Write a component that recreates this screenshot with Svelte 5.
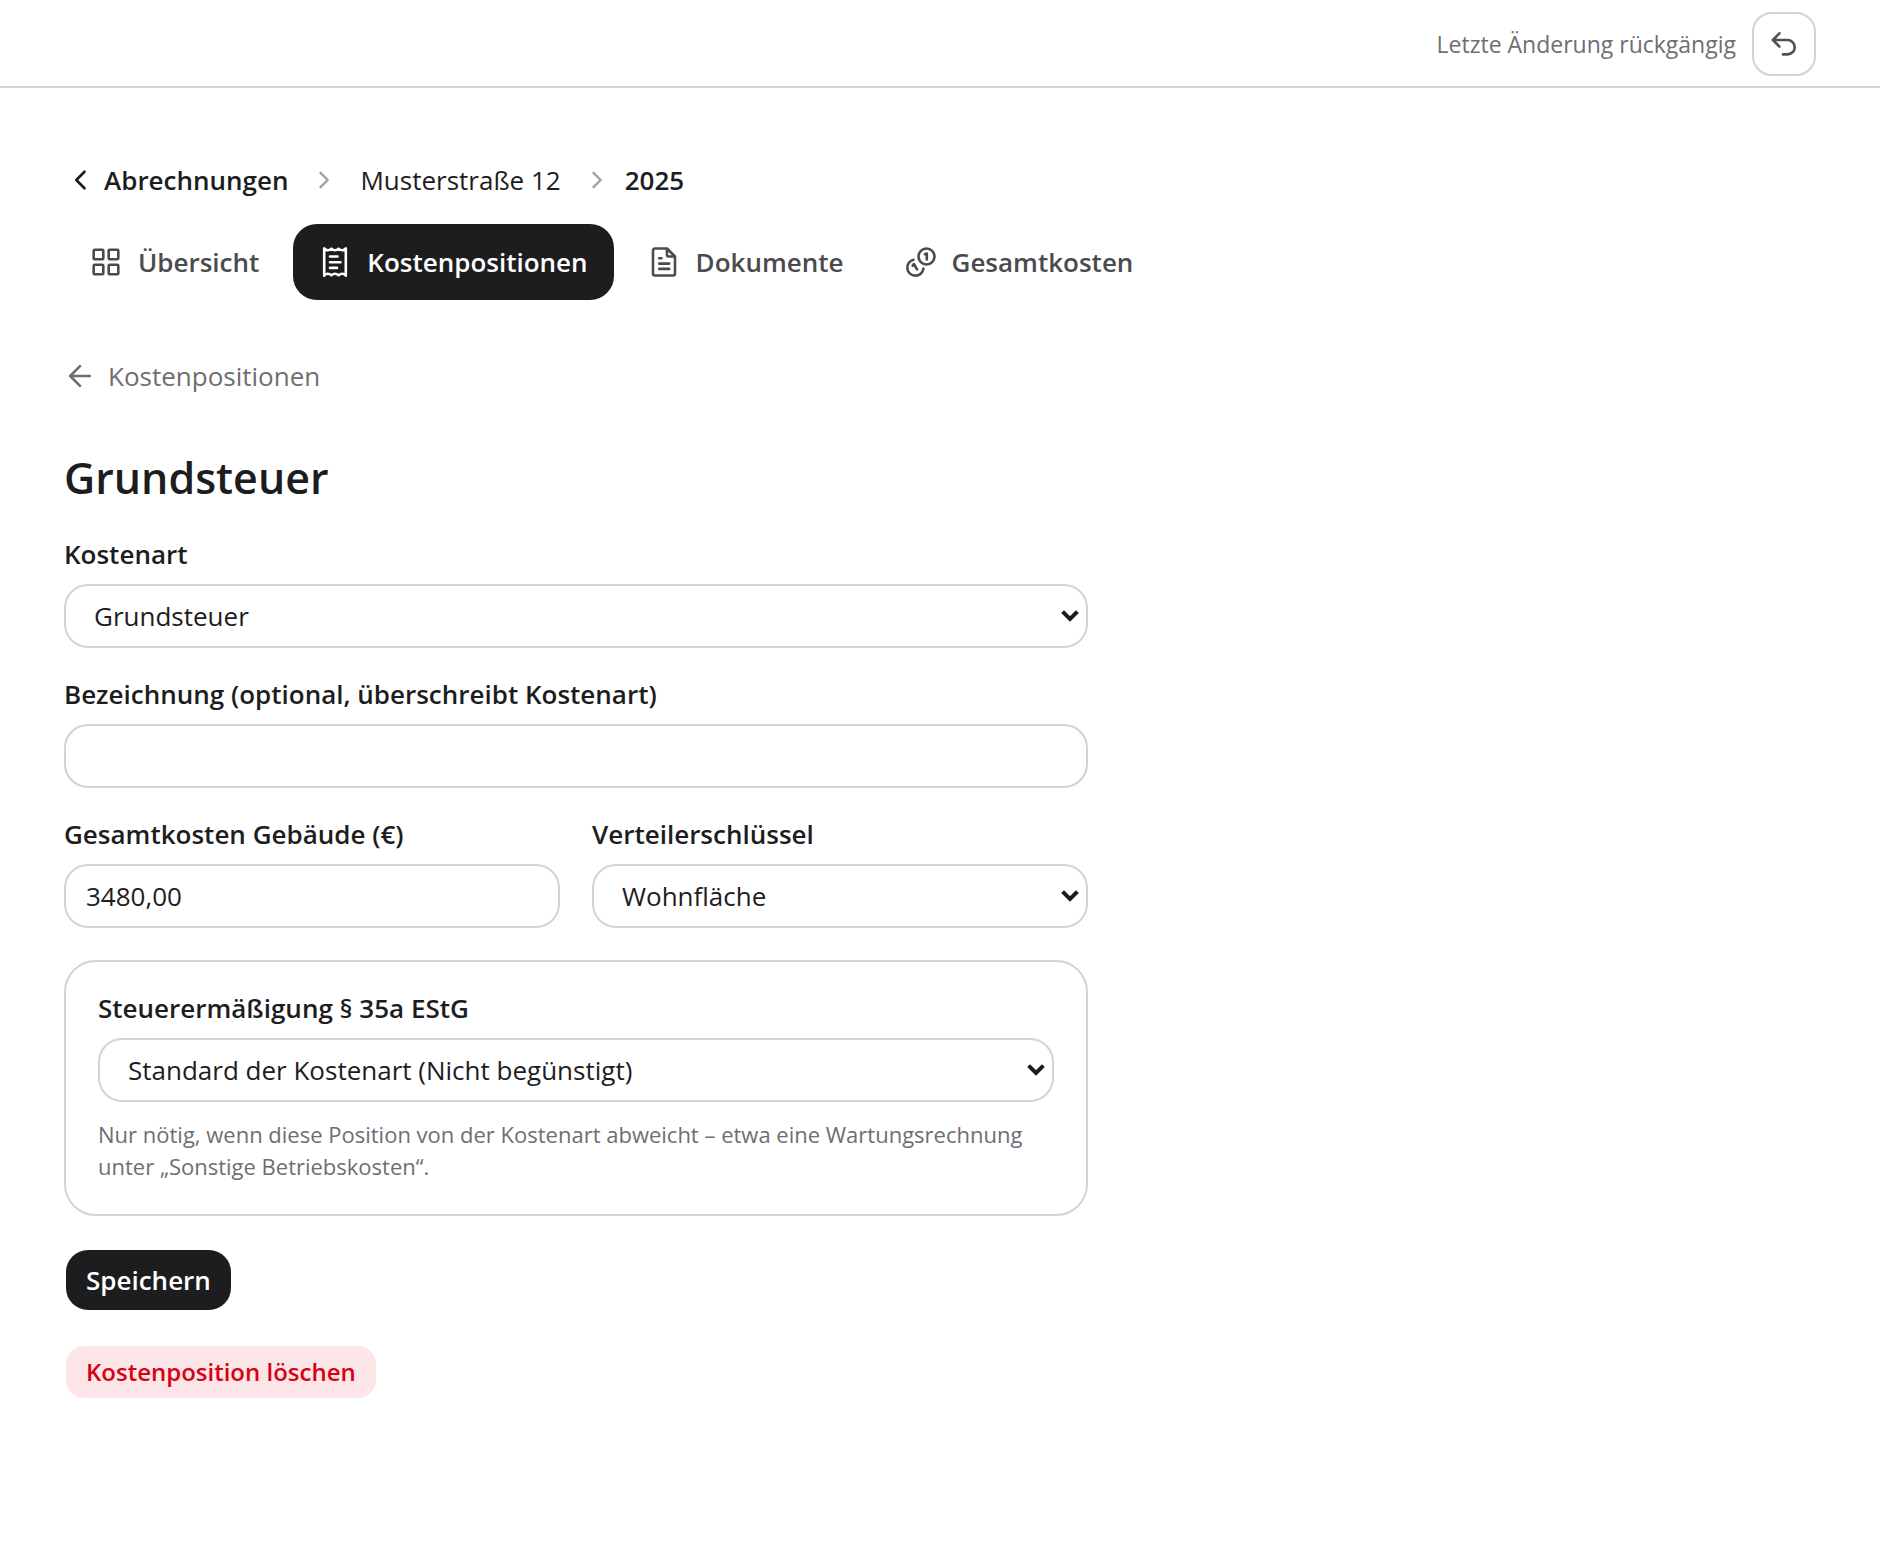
<script>
    const tabs = [
        { id: "uebersicht", label: "Übersicht" },
        { id: "kostenpositionen", label: "Kostenpositionen" },
        { id: "dokumente", label: "Dokumente" },
        { id: "gesamtkosten", label: "Gesamtkosten" },
    ];

    let active = "kostenpositionen";
    let kostenart = "Grundsteuer";
    let bezeichnung = "";
    let betrag = "3480,00";
    let schluessel = "Wohnfläche";
    let beguenstigung = "standard";
</script>

<style>
    :global(body) {
        margin: 0;
        background: #fff;
    }
    .page {
        color: #1d1d1f;
        font-family: "Segoe UI", "Open Sans", sans-serif;
        font-size: 26px;
        line-height: 40px;
    }
    a {
        color: inherit;
        text-decoration: none;
    }
    svg {
        display: block;
        flex: none;
        fill: none;
        stroke: currentColor;
        stroke-linecap: round;
        stroke-linejoin: round;
    }
    .topbar {
        display: flex;
        align-items: center;
        justify-content: flex-end;
        gap: 16px;
        padding: 12px 64px 10px;
        border-bottom: 2px solid #d2d2d7;
        color: #6e6e73;
        font-size: 23px;
    }
    .undo {
        display: grid;
        place-items: center;
        width: 64px;
        height: 64px;
        padding: 0;
        border: 2px solid #d2d2d7;
        border-radius: 20px;
        background: #fff;
        color: #515154;
    }
    main {
        padding: 72px 64px;
    }
    .crumbs {
        display: flex;
        align-items: center;
        gap: 16px;
    }
    .crumbs a {
        display: flex;
        align-items: center;
        gap: 8px;
        padding: 0 8px;
    }
    .crumbs .sep {
        color: #a1a1a6;
    }
    .strong {
        font-weight: 600;
    }
    .tabs {
        display: flex;
        gap: 8px;
        margin-top: 24px;
    }
    .tabs a {
        display: flex;
        align-items: center;
        gap: 16px;
        padding: 18px 26px;
        border-radius: 24px;
        color: #4b4b4d;
        font-weight: 600;
    }
    .tabs a.active {
        background: #1d1d1f;
        color: #fff;
    }
    .back {
        display: flex;
        align-items: center;
        gap: 12px;
        width: fit-content;
        margin-top: 56px;
        color: #6e6e73;
    }
    h1 {
        margin: 52px 0 32px;
        font-size: 43px;
        line-height: 60px;
        font-weight: 600;
    }
    form {
        display: flex;
        flex-direction: column;
        gap: 32px;
        max-width: 1024px;
    }
    .field {
        display: flex;
        flex-direction: column;
        gap: 16px;
    }
    .field label {
        line-height: 28px;
        font-weight: 600;
    }
    .row {
        display: grid;
        grid-template-columns: 1fr 1fr;
        gap: 32px;
    }
    input,
    select {
        box-sizing: border-box;
        width: 100%;
        height: 64px;
        padding: 0 20px;
        border: 2px solid #d2d2d7;
        border-radius: 24px;
        background: #fff;
        color: inherit;
        font: inherit;
    }
    select {
        appearance: none;
        padding: 0 40px 0 28px;
        background: #fff
            url("data:image/svg+xml,%3Csvg xmlns='http://www.w3.org/2000/svg' width='18' height='12' viewBox='0 0 18 12'%3E%3Cpath d='M1.600 1.700L9 9l7.400-7.300' fill='none' stroke='%231d1d1f' stroke-width='4'/%3E%3C/svg%3E")
            no-repeat right 7px center;
    }
    .card {
        padding: 32px;
        border: 2px solid #d2d2d7;
        border-radius: 32px;
    }
    .hint {
        margin: 16px 0 0;
        color: #6e6e73;
        font-size: 22px;
        line-height: 32px;
    }
    .save,
    .delete {
        align-self: flex-start;
        padding: 0 20px;
        border: 2px solid transparent;
        background-clip: padding-box;
        font: inherit;
        font-weight: 600;
    }
    .save {
        height: 64px;
        border-radius: 24px;
        background-color: #1d1d1f;
        color: #fff;
    }
    .delete {
        height: 56px;
        border-radius: 20px;
        background-color: #fbe5e7;
        color: #d70015;
        font-size: 24px;
    }
</style>

<div class="page">
    <header class="topbar">
        <span>Letzte Änderung rückgängig</span>
        <button class="undo" type="button" aria-label="Rückgängig">
            <svg width="32" height="32" viewBox="0 0 32 32" stroke-width="2.6">
                <path d="M11.400 5.300L4.900 12l6.500 6.600M4.900 12h14.600a7.200 7.200 0 0 1 0 14.400H15" />
            </svg>
        </button>
    </header>

    <main>
        <nav class="crumbs" aria-label="Brotkrumen">
            <a class="strong" href="#abrechnungen">
                <svg width="24" height="24" viewBox="0 0 24 24" stroke-width="2.7">
                    <path d="M12.500 3.800L4.300 12l8.200 8.200" />
                </svg>
                Abrechnungen
            </a>
            <svg class="sep" width="24" height="24" viewBox="0 0 24 24" stroke-width="2.4">
                <path d="M8.500 4.800l7.200 7.200-7.200 7.200" />
            </svg>
            <a href="#objekt">Musterstraße 12</a>
            <svg class="sep" width="24" height="24" viewBox="0 0 24 24" stroke-width="2.4">
                <path d="M8.500 4.800l7.200 7.200-7.200 7.200" />
            </svg>
            <span class="strong">2025</span>
        </nav>

        <nav class="tabs" aria-label="Bereiche">
            {#each tabs as tab (tab.id)}
                <a href={`#${tab.id}`} class:active={active === tab.id}>
                    <svg width="32" height="32" viewBox="0 0 32 32" stroke-width="2.6">
                        {#if tab.id === "uebersicht"}
                            <rect x="3.7" y="3.7" width="9.600" height="9.600" rx="1" />
                            <rect x="18.700" y="3.7" width="9.600" height="9.600" rx="1" />
                            <rect x="3.7" y="18.700" width="9.600" height="9.600" rx="1" />
                            <rect x="18.700" y="18.700" width="9.600" height="9.600" rx="1" />
                        {:else if tab.id === "kostenpositionen"}
                            <path
                                d="M5.200 2.300q1.800 2 3.600 1.900 1.800-.1 3.600-1.500 1.800 1.500 3.600 1.500t3.600-1.500q1.800 1.400 3.600 1.500 1.800.1 3.600-1.900v27.400q-1.800-2-3.600-1.900-1.800.1-3.600 1.500-1.800-1.500-3.600-1.500t-3.600 1.500q-1.800-1.400-3.600-1.500-1.800-.1-3.600 1.900z" />
                            <path d="M11 10.500h7.500M11 16.200h10.500M11 21.900h7" />
                        {:else if tab.id === "dokumente"}
                            <path d="M19 2.500H7a2 2 0 0 0-2 2v23a2 2 0 0 0 2 2h18a2 2 0 0 0 2-2v-17zv6.500a1.500 1.500 0 0 0 1.500 1.500H27" />
                            <path d="M11.200 12.300h2.300M11.200 17.600h10M11.200 22.900h10" />
                        {:else}
                            <circle cx="22.500" cy="10.500" r="8" />
                            <path d="M9.400 13.700a8.100 8.100 0 1 0 10 8.900" />
                            <path d="M21 8.200l1.800-.7v6M8.700 19.600l1.200-1.600 3.200 5.400" />
                        {/if}
                    </svg>
                    {tab.label}
                </a>
            {/each}
        </nav>

        <a class="back" href="#kostenpositionen">
            <svg width="32" height="32" viewBox="0 0 32 32" stroke-width="2.6">
                <path d="M16 6.200L6.200 16l9.800 9.800M6.200 16h19.600" />
            </svg>
            Kostenpositionen
        </a>

        <h1>Grundsteuer</h1>

        <form on:submit|preventDefault>
            <div class="field">
                <label for="kostenart">Kostenart</label>
                <select id="kostenart" bind:value={kostenart}>
                    <option>Grundsteuer</option>
                </select>
            </div>
            <div class="field">
                <label for="bezeichnung">Bezeichnung (optional, überschreibt Kostenart)</label>
                <input id="bezeichnung" type="text" bind:value={bezeichnung} />
            </div>
            <div class="row">
                <div class="field">
                    <label for="betrag">Gesamtkosten Gebäude (€)</label>
                    <input id="betrag" type="text" inputmode="decimal" bind:value={betrag} />
                </div>
                <div class="field">
                    <label for="schluessel">Verteilerschlüssel</label>
                    <select id="schluessel" bind:value={schluessel}>
                        <option>Wohnfläche</option>
                    </select>
                </div>
            </div>
            <div class="card">
                <div class="field">
                    <label for="beguenstigung">Steuerermäßigung § 35a EStG</label>
                    <select id="beguenstigung" bind:value={beguenstigung}>
                        <option value="standard">Standard der Kostenart (Nicht begünstigt)</option>
                    </select>
                </div>
                <p class="hint">
                    Nur nötig, wenn diese Position von der Kostenart abweicht – etwa eine Wartungsrechnung unter „Sonstige Betriebskosten“.
                </p>
            </div>
            <button class="save" type="submit">Speichern</button>
            <button class="delete" type="button">Kostenposition löschen</button>
        </form>
    </main>
</div>
